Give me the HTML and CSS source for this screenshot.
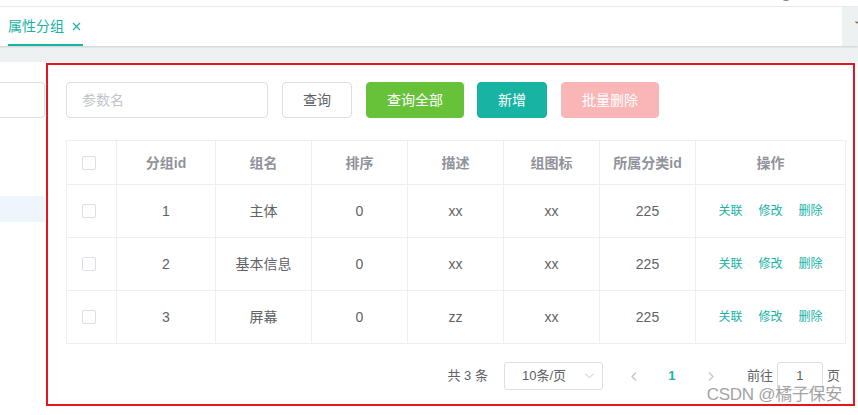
FILE: index.html
```html
<!DOCTYPE html>
<html lang="zh-CN">
<head>
<meta charset="utf-8">
<title>属性分组</title>
<link rel="stylesheet" href="styles.css">
</head>
<body>
<div class="topbar">
  <span class="avatar"></span>
</div>
<div class="tabbar">
  <div class="tabs">
    <div class="tab">
      <span class="tab-label">属性分组</span>
      <svg class="tab-close" width="9" height="9" viewBox="0 0 9 9"><path d="M1 1L8 8M8 1L1 8" stroke="#17b3a3" stroke-width="1.1" fill="none"/></svg>
    </div>
  </div>
  <div class="tab-more">
    <svg width="16" height="38" viewBox="0 0 16 38"><path d="M13.5 14.5L15 16L16.5 14.5" stroke="#8a6a5a" stroke-width="1.2" fill="none"/></svg>
  </div>
</div>
<div class="band"></div>
<div class="main">
  <aside class="tree">
    <div class="tree-input"></div>
    <div class="tree-node-current"></div>
  </aside>
  <section class="panel">
    <div class="toolbar">
      <div class="search-input">参数名</div>
      <button class="btn btn-default">查询</button>
      <button class="btn btn-success">查询全部</button>
      <button class="btn btn-primary btn-add">新增</button>
      <button class="btn btn-danger-disabled">批量删除</button>
    </div>
    <table class="grid">
      <colgroup>
        <col style="width:50px"><col style="width:99px"><col style="width:96px"><col style="width:96px"><col style="width:96px"><col style="width:96px"><col style="width:96px"><col style="width:150px">
      </colgroup>
      <thead>
        <tr class="head-row">
          <th class="sel"><span class="checkbox"></span></th>
          <th>分组id</th><th>组名</th><th>排序</th><th>描述</th><th>组图标</th><th>所属分类id</th><th>操作</th>
        </tr>
      </thead>
      <tbody>
        <tr class="body-row">
          <td class="sel"><span class="checkbox"></span></td>
          <td>1</td><td>主体</td><td>0</td><td>xx</td><td>xx</td><td>225</td>
          <td><div class="ops"><a>关联</a><a>修改</a><a>删除</a></div></td>
        </tr>
        <tr class="body-row">
          <td class="sel"><span class="checkbox"></span></td>
          <td>2</td><td>基本信息</td><td>0</td><td>xx</td><td>xx</td><td>225</td>
          <td><div class="ops"><a>关联</a><a>修改</a><a>删除</a></div></td>
        </tr>
        <tr class="body-row">
          <td class="sel"><span class="checkbox"></span></td>
          <td>3</td><td>屏幕</td><td>0</td><td>zz</td><td>xx</td><td>225</td>
          <td><div class="ops"><a>关联</a><a>修改</a><a>删除</a></div></td>
        </tr>
      </tbody>
    </table>
    <div class="pager">
      <span class="total">共 3 条</span>
      <div class="size-select">
        <span>10条/页</span>
        <svg width="9" height="6" viewBox="0 0 9 6"><path d="M0.5 0.8L4.5 4.8L8.5 0.8" stroke="#c0c4cc" stroke-width="1" fill="none"/></svg>
      </div>
      <span class="pg-btn prev"><svg width="6" height="9" viewBox="0 0 6 9"><path d="M5 0.5L1 4.5L5 8.5" stroke="#c0c4cc" stroke-width="1.3" fill="none"/></svg></span>
      <span class="pg-num">1</span>
      <span class="pg-btn next"><svg width="6" height="9" viewBox="0 0 6 9"><path d="M1 0.5L5 4.5L1 8.5" stroke="#c0c4cc" stroke-width="1.3" fill="none"/></svg></span>
      <span class="goto">前往</span>
      <span class="goto-input">1</span>
      <span class="goto-unit">页</span>
    </div>
    <div class="watermark">CSDN @橘子保安</div>
  </section>
</div>
</body>
</html>
```
FILE: styles.css
```css
* { box-sizing: border-box; }
html, body {
  margin: 0;
  padding: 0;
  background: #fff;
  font-family: "Liberation Sans", "Noto Sans CJK SC", sans-serif;
  font-size: 14px;
  color: #606266;
  width: 858px;
  height: 415px;
  overflow: hidden;
}
.topbar {
  height: 7px;
  background: #fff;
  border-bottom: 1px solid #ececec;
  display: flex;
  justify-content: flex-end;
  align-items: flex-end;
  padding-right: 66px;
  padding-bottom: 5px;
  overflow: hidden;
}
.avatar {
  width: 12px;
  height: 12px;
  flex: none;
  border-radius: 50%;
  background: #8c7a6b;
}
.tabbar {
  height: 39px;
  display: flex;
  position: relative;
  z-index: 1;
  box-shadow: 0 1px 2px rgba(0, 0, 0, 0.14);
}
.tabs {
  flex: 1;
  background: #fff;
  display: flex;
  padding-left: 8px;
}
.tab {
  display: flex;
  align-items: center;
  height: 39px;
  border-bottom: 2px solid #17b3a3;
  padding-top: 1px;
  padding-right: 2px;
}
.tab-label {
  color: #17b3a3;
  font-size: 14px;
  line-height: 20px;
}
.tab-close {
  margin-left: 8px;
  display: block;
}
.tab-more {
  width: 16px;
  background: #eef1f2;
}
.tab-more svg { display: block; }
.band {
  height: 16px;
  background: #eef1f2;
}
.main {
  display: flex;
  height: 353px;
}
.tree {
  width: 46px;
  flex: none;
  padding-top: 20px;
  overflow: hidden;
}
.tree-input {
  width: 45px;
  height: 36px;
  border: 1px solid #dcdfe6;
  border-left: none;
  border-radius: 0 4px 4px 0;
}
.tree-node-current {
  margin-top: 78px;
  width: 45px;
  height: 26px;
  background: #eef5fd;
}
.panel {
  position: relative;
  margin-top: 1px;
  width: 809px;
  height: 343px;
  border: 2px solid #e5141f;
  padding: 17px 8px 0 18px;
}
.toolbar {
  display: flex;
  align-items: center;
  gap: 14px;
  height: 36px;
}
.search-input {
  width: 202px;
  height: 36px;
  border: 1px solid #dcdfe6;
  border-radius: 4px;
  padding-left: 15px;
  color: #c0c4cc;
  font-size: 14px;
  line-height: 34px;
}
.btn {
  height: 36px;
  padding: 0 20px;
  border-radius: 4px;
  border: 1px solid transparent;
  font-family: inherit;
  font-size: 14px;
  line-height: 34px;
  cursor: pointer;
}
.btn-default {
  background: #fff;
  border-color: #dcdfe6;
  color: #606266;
}
.btn-success {
  background: #67c23a;
  border-color: #67c23a;
  color: #fff;
}
.btn-primary {
  background: #17b3a3;
  border-color: #17b3a3;
  color: #fff;
}
.btn-add { margin-left: -1px; }
.btn-danger-disabled {
  background: #fab6b6;
  border-color: #fab6b6;
  color: #fff;
}
.grid {
  margin-top: 22px;
  width: 779px;
  table-layout: fixed;
  border-collapse: separate;
  border-spacing: 0;
  border-top: 1px solid #ebeef5;
  border-left: 1px solid #ebeef5;
}
.grid th, .grid td {
  border-right: 1px solid #ebeef5;
  border-bottom: 1px solid #ebeef5;
  padding: 0;
  text-align: center;
  vertical-align: middle;
  line-height: 20px;
  font-size: 14px;
}
.grid th {
  color: #909399;
  font-weight: bold;
}
.grid td {
  color: #606266;
}
.grid .sel {
  text-align: left;
  padding-left: 15px;
}
.head-row { height: 44px; }
.body-row { height: 53px; }
.checkbox {
  display: block;
  width: 14px;
  height: 14px;
  border: 1px solid #dcdfe6;
  border-radius: 2px;
  background: #fff;
}
.ops {
  display: flex;
  justify-content: center;
  gap: 16px;
}
.ops a {
  color: #17b3a3;
  font-size: 12px;
  line-height: 16px;
}
.pager {
  margin-top: 18px;
  display: flex;
  justify-content: flex-end;
  align-items: center;
  height: 28px;
  padding-right: 5px;
  font-size: 13px;
  color: #606266;
}
.total {
  line-height: 28px;
  margin-right: 16px;
  white-space: pre;
}
.size-select {
  width: 99px;
  height: 28px;
  border: 1px solid #dcdfe6;
  border-radius: 3px;
  display: flex;
  align-items: center;
  justify-content: space-between;
  padding: 0 8px 0 17px;
  line-height: 26px;
  margin-right: 16px;
}
.size-select svg { display: block; }
.pg-btn {
  width: 30px;
  height: 28px;
  display: flex;
  align-items: center;
  justify-content: center;
}
.pg-num {
  width: 30px;
  text-align: center;
  color: #17b3a3;
  font-weight: bold;
  line-height: 28px;
  margin: 0 9px 0 8px;
}
.goto {
  margin-left: 21px;
  line-height: 28px;
}
.goto-input {
  width: 46px;
  height: 28px;
  border: 1px solid #dcdfe6;
  border-radius: 3px;
  text-align: center;
  line-height: 26px;
  margin: 0 4px 0 4px;
}
.goto-unit { line-height: 28px; }
.watermark {
  position: absolute;
  right: 11px;
  bottom: -2px;
  font-size: 17px;
  letter-spacing: -0.3px;
  line-height: 22px;
  color: #a3a3a3;
  white-space: nowrap;
}
```
